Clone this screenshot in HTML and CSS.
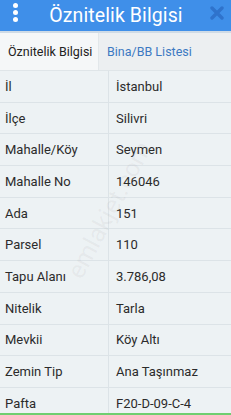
FILE: index.html
```html
<!DOCTYPE html>
<html lang="tr">
<head>
<meta charset="utf-8">
<title>Öznitelik Bilgisi</title>
<link rel="stylesheet" href="styles.css">
</head>
<body>
<div class="app">
  <header class="topbar">
    <span class="kebab"><i></i><i></i><i></i></span>
    <h1 class="title">Öznitelik Bilgisi</h1>
    <svg class="close" width="14" height="14" viewBox="0 0 14 14"><path d="M2 2L12 12M12 2L2 12" stroke="#2f73cc" stroke-width="3.4" stroke-linecap="round"/></svg>
  </header>
  <nav class="tabs">
    <div class="tab active">Öznitelik Bilgisi</div>
    <div class="tab">Bina/BB Listesi</div>
  </nav>
  <div class="table">
    <div class="row"><div class="k">İl</div><div class="v">İstanbul</div></div>
    <div class="row"><div class="k">İlçe</div><div class="v">Silivri</div></div>
    <div class="row"><div class="k">Mahalle/Köy</div><div class="v">Seymen</div></div>
    <div class="row"><div class="k">Mahalle No</div><div class="v">146046</div></div>
    <div class="row"><div class="k">Ada</div><div class="v">151</div></div>
    <div class="row"><div class="k">Parsel</div><div class="v">110</div></div>
    <div class="row"><div class="k">Tapu Alanı</div><div class="v">3.786,08</div></div>
    <div class="row"><div class="k">Nitelik</div><div class="v">Tarla</div></div>
    <div class="row"><div class="k">Mevkii</div><div class="v">Köy Altı</div></div>
    <div class="row"><div class="k">Zemin Tip</div><div class="v">Ana Taşınmaz</div></div>
    <div class="row"><div class="k">Pafta</div><div class="v">F20-D-09-C-4</div></div>
  </div>
  <div class="watermark">emlakjet.com</div>
  <div class="bottomline"></div>
</div>
</body>
</html>
```
FILE: styles.css
```css
html, body {
  margin: 0;
  padding: 0;
}
body {
  width: 231px;
  height: 415px;
  overflow: hidden;
  background: #edf2f4;
  font-family: Roboto, "Noto Sans", sans-serif;
  color: #2b2b2b;
}
.app {
  position: relative;
  width: 231px;
  height: 415px;
  overflow: hidden;
}
.topbar {
  height: 31px;
  background: #3f8fe9;
  display: flex;
  align-items: center;
  position: relative;
  border-bottom: 2px solid #cfdbe6;
}
.kebab {
  position: absolute;
  left: 13px;
  top: 3px;
  display: flex;
  flex-direction: column;
  gap: 2px;
}
.kebab i {
  display: block;
  width: 5px;
  height: 5px;
  border-radius: 50%;
  background: #fff;
}
.title {
  margin: 0;
  width: 100%;
  text-align: center;
  font-size: 19.5px;
  font-weight: 400;
  color: #fff;
  letter-spacing: 0.1px;
  padding-left: 1px;
}
.close {
  position: absolute;
  right: 7px;
  top: 6px;
}
.tabs {
  display: flex;
  height: 37px;
  background: #eceff1;
  border-bottom: 1px solid #dfe5e8;
}
.tab {
  display: flex;
  align-items: center;
  font-size: 12.5px;
  color: #3c79c2;
  padding-left: 8px;
}
.tab.active {
  width: 90px;
  padding-left: 8px;
  background: #f5f7f8;
  color: #222;
  border-right: 1px solid #e2e7ea;
}
.table {
  display: flex;
  flex-direction: column;
}
.row {
  display: grid;
  grid-template-columns: 109px 1fr;
  height: 30.7px;
  border-bottom: 1px solid #dce3e7;
  font-size: 13px;
}
.k, .v {
  display: flex;
  align-items: center;
}
.k {
  padding-left: 5px;
  border-right: 1px solid #dce3e7;
}
.v {
  padding-left: 7px;
}
.watermark {
  position: absolute;
  left: 74px;
  top: 262px;
  font-size: 25px;
  color: rgba(110, 110, 110, 0.07);
  transform: rotate(-62deg);
  transform-origin: left center;
  pointer-events: none;
}
.bottomline {
  position: absolute;
  left: 0;
  right: 0;
  bottom: 0;
  height: 2px;
  background: #6fce70;
}
```
